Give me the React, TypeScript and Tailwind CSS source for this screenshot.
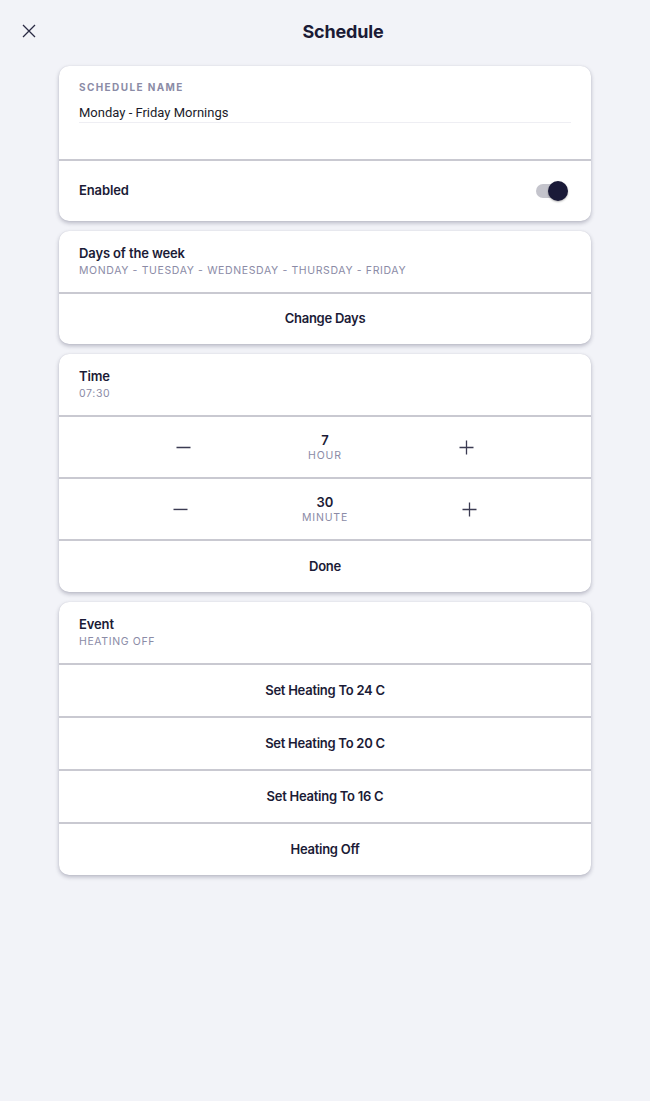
import React from 'react';

const font = { fontFamily: 'Inter, "Noto Sans", sans-serif' };

const Divider = () => <div className="h-[2px] bg-[#c9c9d1]" />;

const HeaderRow = ({ title, sub }: { title: string; sub: string }) => (
  <div className="h-[61px] px-5 pt-[13px]">
    <div className="text-[13px] font-semibold leading-[18px] tracking-[-0.01em] text-[#1b1b36]">{title}</div>
    <div className="mt-[2px] text-[10.5px] leading-[14px] tracking-[0.06em] text-[#8b8ba6] uppercase">{sub}</div>
  </div>
);

const ButtonRow = ({ label, h = 'h-[51px]' }: { label: string; h?: string }) => (
  <button className={`${h} w-full flex items-center justify-center text-[13px] font-semibold tracking-[-0.02em] text-[#1b1b36]`}>
    {label}
  </button>
);

const Minus = () => (
  <svg width="15" height="15" viewBox="0 0 15 15" className="text-[#3b3b52]">
    <path d="M0.5 7.5h14" stroke="currentColor" strokeWidth="1.3" />
  </svg>
);

const Plus = () => (
  <svg width="15" height="15" viewBox="0 0 15 15" className="text-[#3b3b52]">
    <path d="M0.5 7.5h14M7.5 0.5v14" stroke="currentColor" strokeWidth="1.3" />
  </svg>
);

const Stepper = ({ value, unit }: { value: string; unit: string }) => (
  <div className="h-[60px] flex items-center justify-evenly">
    <button><Minus /></button>
    <div className="flex flex-col items-center">
      <span className="text-[13px] font-semibold leading-[18px] text-[#1b1b36]">{value}</span>
      <span className="text-[10.5px] leading-[14px] tracking-[0.08em] text-[#8b8ba6]">{unit}</span>
    </div>
    <button><Plus /></button>
  </div>
);

const Card = ({ children }: { children: React.ReactNode }) => (
  <div className="bg-white rounded-[10px] overflow-hidden shadow-[0_2px_4px_rgba(30,30,60,0.28),0_0_1px_rgba(30,30,60,0.15)]">
    {children}
  </div>
);

export default function App() {
  return (
    <div className="min-h-[1101px] w-[650px] bg-[#f2f3f8]" style={font}>
      <div className="h-[62px] flex items-center">
        <button className="w-[36px] pl-[22px] text-[#2a2a44]">
          <svg width="14" height="14" viewBox="0 0 14 14" className="block">
            <path d="M1 1l12 12M13 1L1 13" stroke="currentColor" strokeWidth="1.3" />
          </svg>
        </button>
        <h1 className="flex-1 text-center text-[18px] font-bold tracking-[-0.01em] text-[#1b1b36]">Schedule</h1>
      </div>

      <div className="mt-1 mx-[59px] flex flex-col gap-[10px]">
        <Card>
          <div className="h-[93px] px-5 pt-[14px]">
            <div className="text-[10px] font-bold leading-[14px] tracking-[0.14em] text-[#8b8ba6]">SCHEDULE NAME</div>
            <div
              className="mt-[9px] h-[20px] border-b border-[#eeeef3] text-[13px] leading-[20px] text-[#1b1b2a]"
              style={{ fontFamily: 'Roboto, "Liberation Sans", sans-serif' }}
            >
              Monday - Friday Mornings
            </div>
          </div>
          <Divider />
          <div className="h-[60px] pl-5 pr-[23px] flex items-center justify-between">
            <span className="text-[13px] font-semibold tracking-[-0.01em] text-[#1b1b36]">Enabled</span>
            <div className="relative w-[32px] h-[20px] flex items-center">
              <div className="w-[30px] h-[14px] rounded-full bg-[#c4c4cc]" />
              <div className="absolute right-0 top-0 w-[20px] h-[20px] rounded-full bg-[#1a1a38] shadow-[0_1px_2px_rgba(0,0,0,0.3)]" />
            </div>
          </div>
        </Card>

        <Card>
          <HeaderRow title="Days of the week" sub="Monday - Tuesday - Wednesday - Thursday - Friday" />
          <Divider />
          <ButtonRow label="Change Days" h="h-[50px]" />
        </Card>

        <Card>
          <HeaderRow title="Time" sub="07:30" />
          <Divider />
          <Stepper value="7" unit="HOUR" />
          <Divider />
          <Stepper value="30" unit="MINUTE" />
          <Divider />
          <ButtonRow label="Done" />
        </Card>

        <Card>
          <HeaderRow title="Event" sub="Heating Off" />
          <Divider />
          <ButtonRow label="Set Heating To 24 C" />
          <Divider />
          <ButtonRow label="Set Heating To 20 C" />
          <Divider />
          <ButtonRow label="Set Heating To 16 C" />
          <Divider />
          <ButtonRow label="Heating Off" />
        </Card>
      </div>
    </div>
  );
}
